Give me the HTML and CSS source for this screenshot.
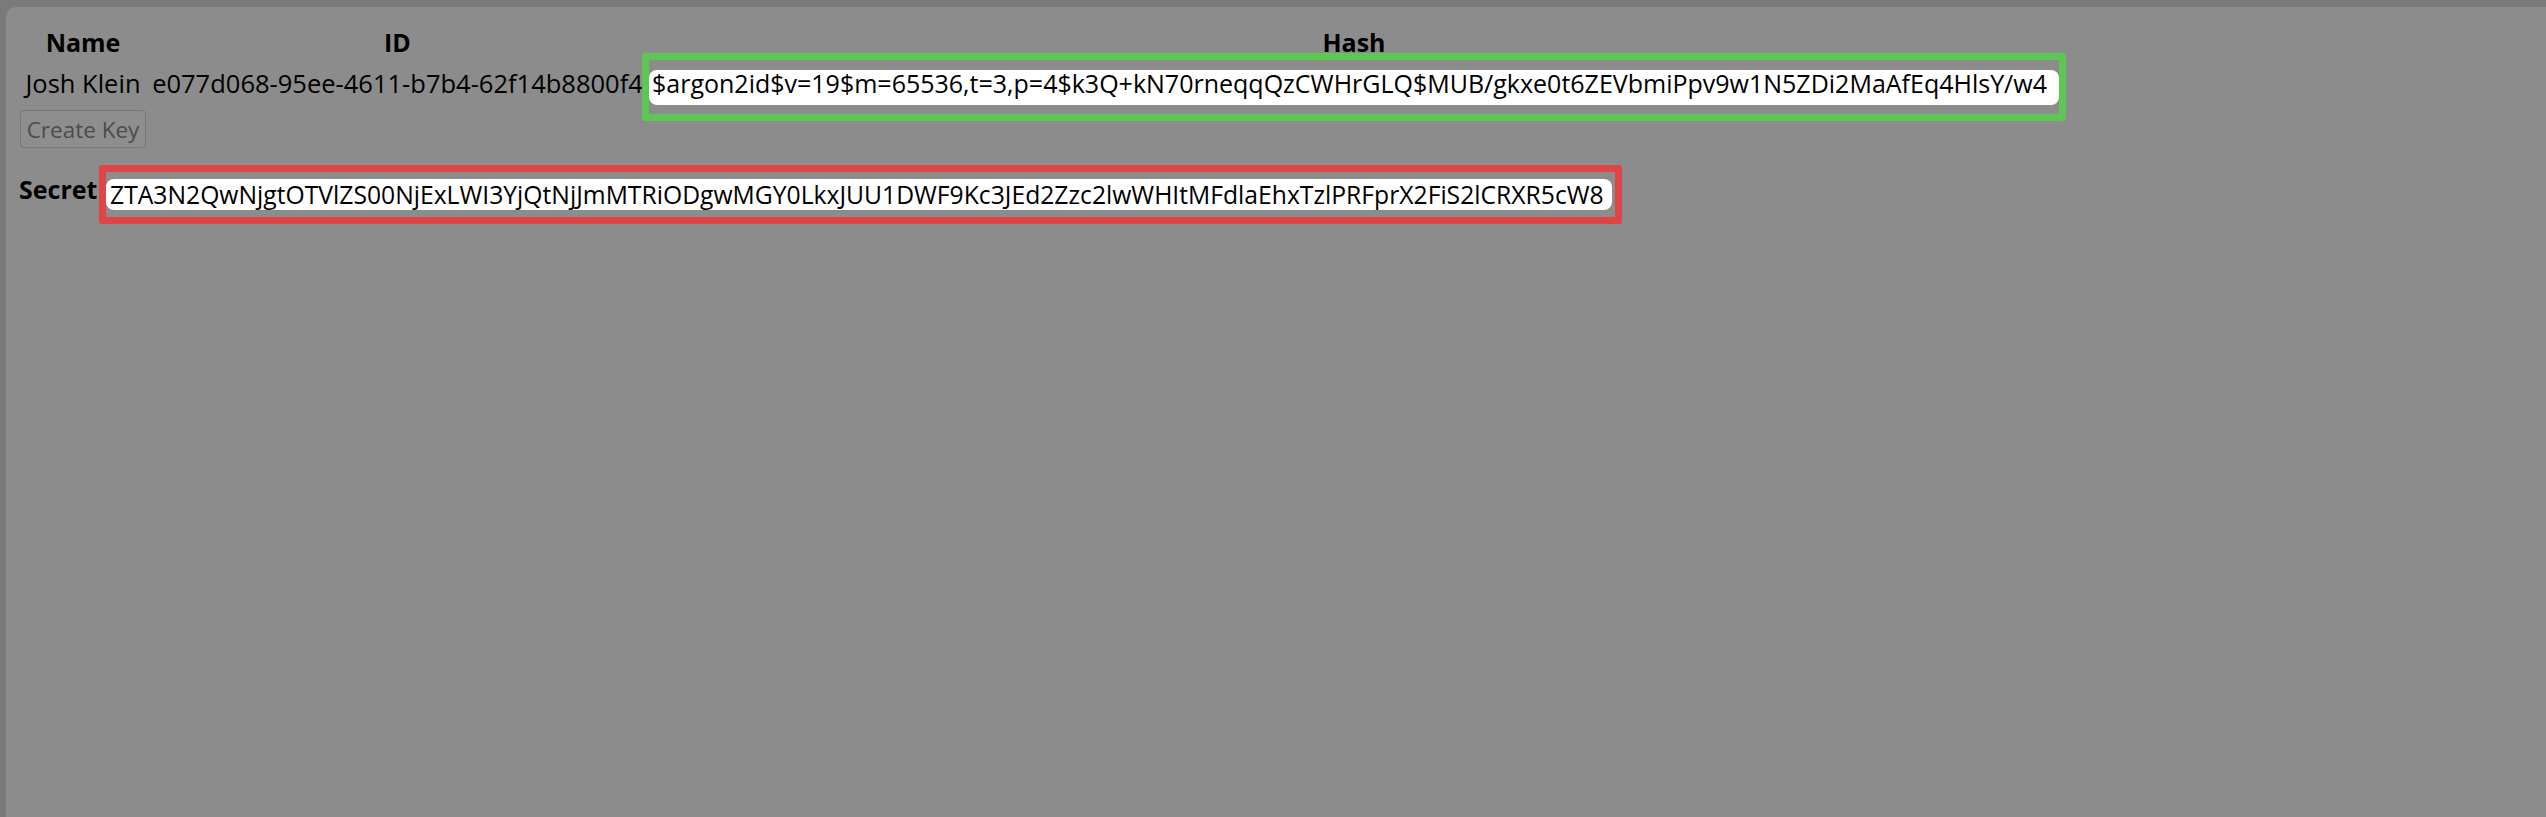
FILE: index.html
```html
<!DOCTYPE html>
<html lang="en">
<head>
<meta charset="utf-8">
<title>API Keys</title>
<link rel="stylesheet" href="styles.css">
</head>
<body>
<div class="backdrop">
  <section class="panel">
    <div class="keys">
      <div class="th">Name</div>
      <div class="th">ID</div>
      <div class="th">Hash</div>
      <div class="td">Josh Klein</div>
      <div class="td">e077d068-95ee-4611-b7b4-62f14b8800f4</div>
      <div class="hash-cell mark mark-green">
        <input class="field field-hash" type="text" readonly value="$argon2id$v=19$m=65536,t=3,p=4$k3Q+kN70rneqqQzCWHrGLQ$MUB/gkxe0t6ZEVbmiPpv9w1N5ZDi2MaAfEq4HlsY/w4">
      </div>
    </div>
    <button class="create" type="button" disabled>Create Key</button>
    <div class="secret-row">
      <label class="secret-label" for="secret">Secret</label>
      <div class="secret-cell mark mark-red">
        <input id="secret" class="field field-secret" type="text" readonly value="ZTA3N2QwNjgtOTVlZS00NjExLWI3YjQtNjJmMTRiODgwMGY0LkxJUU1DWF9Kc3JEd2Zzc2lwWHItMFdlaEhxTzlPRFprX2FiS2lCRXR5cW8">
      </div>
    </div>
  </section>
</div>
</body>
</html>
```
FILE: styles.css
```css
* {
  box-sizing: border-box;
}

html,
body {
  margin: 0;
  height: 100%;
}

body {
  background: #7a7a7a;
  font-family: "Open Sans", "Noto Sans", sans-serif;
  color: #000;
  overflow: hidden;
}

.backdrop {
  padding: 7px 0 0 6px;
  height: 100%;
}

.panel {
  background: #8c8c8c;
  border-top-left-radius: 10px;
  height: 100%;
  padding: 24px 0 0 14px;
}

/* key table: name / id / hash */
.keys {
  display: grid;
  grid-template-columns: 126px 503px 1410px;
  align-items: start;
}

.th {
  font-weight: 700;
  font-size: 25px;
  line-height: 22px;
  height: 22px;
  text-align: center;
  white-space: nowrap;
}

.td {
  font-size: 25.5px;
  line-height: 26px;
  margin-top: 17px;
  text-align: center;
  white-space: nowrap;
}

.hash-cell {
  margin-top: 17px;
}

/* highlight frames drawn over a cell */
.mark {
  position: relative;
}

.mark::before {
  content: "";
  position: absolute;
  border: 7px solid;
  border-radius: 3px;
  pointer-events: none;
}

.mark-green::before {
  border-color: #5ec653;
  inset: -17px -7px -16px -7px;
}

.mark-red::before {
  border-color: #e04444;
  inset: -14px -10px -14px -7px;
}

.field {
  display: block;
  width: 100%;
  border: 0;
  outline: none;
  border-radius: 8px;
  background: #fff;
  color: #000;
  font-family: "Open Sans", "Noto Sans", sans-serif;
  line-height: 26px;
}

.field-hash {
  height: 35px;
  padding: 0 8px 9px 3px;
  font-size: 25px;
}

.field-secret {
  height: 31px;
  padding: 2px 8px 3px 4px;
  font-size: 24.7px;
}

.create {
  display: block;
  margin-top: 5px;
  width: 126px;
  height: 38px;
  padding: 0;
  border: 1px solid #767676;
  border-radius: 4px;
  background: #8e8e8e;
  color: #4c4c4c;
  font-family: "Open Sans", "Noto Sans", sans-serif;
  font-size: 22.5px;
}

.secret-row {
  display: flex;
  align-items: flex-start;
  margin-top: 31px;
}

.secret-label {
  font-weight: 700;
  font-size: 25px;
  line-height: 20px;
  margin-left: -1px;
  width: 80px;
}

.secret-cell {
  margin-left: 7px;
  width: 1506px;
}
```
